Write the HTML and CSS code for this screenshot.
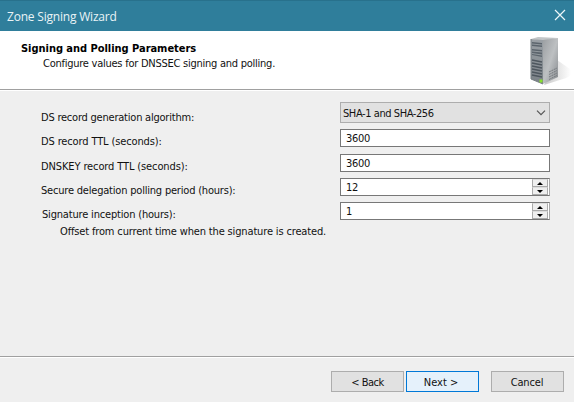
FILE: index.html
```html
<!DOCTYPE html>
<html lang="en">
<head>
<meta charset="utf-8">
<title>Zone Signing Wizard</title>
<link rel="stylesheet" href="styles.css">
</head>
<body>
<div class="window">
  <div class="titlebar">
    <span class="caption">Zone Signing Wizard</span>
    <svg class="close" width="12" height="12" viewBox="0 0 12 12"><path d="M1 1L11 11M11 1L1 11"/></svg>
  </div>
  <header class="header">
    <div>
      <h1 class="heading">Signing and Polling Parameters</h1>
      <p class="subheading">Configure values for DNSSEC signing and polling.</p>
    </div>
    <svg class="server" width="48" height="56" viewBox="0 0 48 56">
      <defs>
        <linearGradient id="side" x1="0" y1="0" x2="1" y2="1"><stop offset="0" stop-color="#9b9fa2"/><stop offset=".5" stop-color="#bdc0c2"/><stop offset="1" stop-color="#85898d"/></linearGradient>
        <linearGradient id="front" x1="0" y1="0" x2="0" y2="1"><stop offset="0" stop-color="#9ba1a6"/><stop offset="1" stop-color="#7a8187"/></linearGradient>
        <linearGradient id="shade" x1="0" y1="0" x2="1" y2="0"><stop offset="0" stop-color="#c8c8c8"/><stop offset="1" stop-color="#fff"/></linearGradient>
      </defs>
      <path d="M31 26L44 35Q48 42 37 45L18 51Z" fill="url(#shade)"/>
      <path d="M5 5L12 3L32 4L17 7Z" fill="#c2c6c8"/>
      <path d="M17 6L32 4V43L17 50Z" fill="url(#side)"/>
      <path d="M5 5L17 6V50L5 45Z" fill="url(#front)"/>
      <path d="M5 5V45L17 50" fill="none" stroke="#777e83"/>
      <path d="M6 8L16 9V13L6 12ZM6 15L16 16V23L6 21Z" fill="#5c656d"/>
      <path d="M6 10L16 11M6 17L16 18M6 19.500L16 21" stroke="#a9afb3" stroke-width=".7"/>
      <path d="M6 26L16 28M6 29L16 31M6 32L16 34M6 35L16 37M6 38L16 40M6 41L16 43" stroke="#4e575f" stroke-width="1.700"/>
      <path d="M23 38L31 34M23 40.500L31 36.500M23 43L31 39M23 45.500L31 41.500" stroke="#6f7478" stroke-width=".9" stroke-dasharray="2 .7"/>
      <rect x="13.500" y="45.500" width="3" height="3" fill="#87e32d"/>
    </svg>
  </header>
  <main class="form">
    <div class="row row-select"><span class="label l1">DS record generation algorithm:</span>
      <div class="select"><span class="choice">SHA-1 and SHA-256</span><svg width="10" height="6" viewBox="0 0 10 6"><path d="M1 .7L5 4.700L9 .7"/></svg></div></div>
    <div class="row row-ttl"><span class="label l2">DS record TTL (seconds):</span><div class="input">3600</div></div>
    <div class="row row-key"><span class="label l3">DNSKEY record TTL (seconds):</span><div class="input">3600</div></div>
    <div class="row row-poll"><span class="label l4">Secure delegation polling period (hours):</span>
      <div class="input spin">12<span class="spinner"><i><svg width="6" height="3" viewBox="0 0 6 3"><path d="M0 3L3 0L6 3Z"/></svg></i><i><svg width="6" height="3" viewBox="0 0 6 3"><path d="M0 0L3 3L6 0Z"/></svg></i></span></div></div>
    <div class="row row-sign"><span class="label l5">Signature inception (hours):</span>
      <div class="input spin">1<span class="spinner"><i><svg width="6" height="3" viewBox="0 0 6 3"><path d="M0 3L3 0L6 3Z"/></svg></i><i><svg width="6" height="3" viewBox="0 0 6 3"><path d="M0 0L3 3L6 0Z"/></svg></i></span></div></div>
    <p class="note">Offset from current time when the signature is created.</p>
  </main>
  <footer class="footer">
    <div class="button back">&lt; Back</div>
    <div class="button primary">Next &gt;</div>
    <div class="button cancel">Cancel</div>
  </footer>
</div>
</body>
</html>
```
FILE: styles.css
```css
* { box-sizing: border-box; }
body { margin: 0; }
.window {
  width: 574px;
  height: 402px;
  display: flex;
  flex-direction: column;
  background: #efefef;
  color: #111;
  font: 11px/14px "DejaVu Sans Condensed", "DejaVu Sans", sans-serif;
  font-stretch: condensed;
  white-space: nowrap;
  overflow: hidden;
}
.titlebar {
  height: 31px;
  flex: none;
  display: flex;
  justify-content: space-between;
  padding: 8px 8px 0 7px;
  background: #2f7e9b;
  border-top: 1px solid #28718c;
  color: #e9f3f6;
}
.caption { font: 12px/15px "Open Sans", sans-serif; letter-spacing: -.2px; }
.close { fill: none; stroke: #eef7fa; stroke-width: 1.2; }
.header {
  height: 60px;
  flex: none;
  display: flex;
  justify-content: space-between;
  padding: 10px 0 0 21px;
  background: #fff;
  border-bottom: 1px solid #fff;
  box-shadow: inset 0 -1px #a0a0a0;
}
.heading { margin: 0; font-size: 11px; line-height: 15px; letter-spacing: -.03px; color: #000; }
.subheading { margin: 0 0 0 22px; line-height: 15px; letter-spacing: -.25px; }
.server { margin: -7px 0 0; flex: none; }
.form { flex: 1; padding: 11px 24px 0 41px; }
.row { display: flex; justify-content: space-between; }
.row-select { height: 27px; }
.row-ttl { height: 25px; }
.row-key, .row-poll { height: 24px; }
.row-sign { height: 23px; }
.label { margin-top: 6px; }
.row-select .label { margin-top: 9px; }
.l1 { letter-spacing: -.22px; }
.l2 { letter-spacing: -.13px; }
.l3 { letter-spacing: -.12px; }
.l4 { letter-spacing: -.2px; }
.l5 { margin-left: 1px; letter-spacing: -.18px; }
.select {
  width: 210px;
  height: 21px;
  display: flex;
  align-items: center;
  justify-content: space-between;
  padding: 0 3px 0 2px;
  background: #e1e1e1;
  border: 1px solid #adadad;
}
.choice { padding-top: 2px; letter-spacing: -.42px; }
.select svg { fill: none; stroke: #555; stroke-width: 1.2; }
.input {
  width: 210px;
  height: 18px;
  padding: 2px 0 0 5px;
  border: 1px solid #777;
  background: #fff;
  letter-spacing: -.3px;
}
.spin { display: flex; justify-content: space-between; padding-right: 1px; border-right-color: #aaa; }
.spinner { width: 16px; height: 16px; margin-top: -2px; display: flex; flex-direction: column; background: #efefef; }
.spinner i { flex: 1; display: flex; align-items: center; justify-content: center; border: 1px solid #aaa; border-top-color: #ddd; }
.spinner svg { fill: #000; }
.note { margin: 0 0 0 19px; line-height: 14px; letter-spacing: -.15px; }
.footer {
  height: 46px;
  flex: none;
  display: flex;
  justify-content: flex-end;
  gap: 2px;
  padding: 14px 10px 0 0;
  border-top: 1px solid #a0a0a0;
  box-shadow: inset 0 1px #fff;
}
.button {
  width: 73px;
  height: 21px;
  padding-top: 4px;
  text-align: center;
  background: #e1e1e1;
  border: 1px solid #adadad;
}
.back { letter-spacing: -.5px; }
.primary { background: #e5f1fb; border-color: #0078d7; padding-right: 3px; }
.cancel { margin-left: 10px; padding-right: 1px; letter-spacing: -.15px; }
```
